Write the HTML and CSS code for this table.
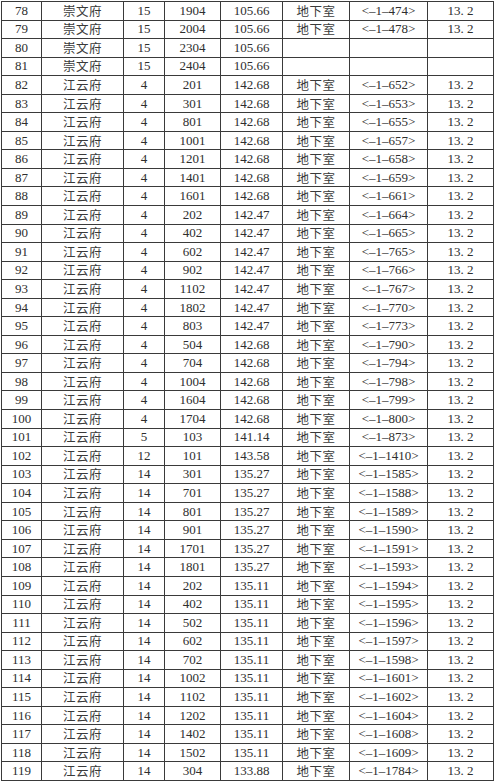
FILE: index.html
```html
<!DOCTYPE html>
<html lang="zh">
<head>
<meta charset="utf-8">
<title>车位表</title>
<link rel="stylesheet" href="styles.css">
</head>
<body>
<table class="sheet">
<colgroup>
<col class="c-no"><col class="c-name"><col class="c-bld"><col class="c-room"><col class="c-area"><col class="c-loc"><col class="c-code"><col class="c-size">
</colgroup>
<tbody>
<tr><td>78</td><td class="zh">崇文府</td><td>15</td><td>1904</td><td>105.66</td><td class="zh">地下室</td><td>&lt;–1–474&gt;</td><td>13. 2</td></tr>
<tr><td>79</td><td class="zh">崇文府</td><td>15</td><td>2004</td><td>105.66</td><td class="zh">地下室</td><td>&lt;–1–478&gt;</td><td>13. 2</td></tr>
<tr><td>80</td><td class="zh">崇文府</td><td>15</td><td>2304</td><td>105.66</td><td></td><td></td><td></td></tr>
<tr><td>81</td><td class="zh">崇文府</td><td>15</td><td>2404</td><td>105.66</td><td></td><td></td><td></td></tr>
<tr><td>82</td><td class="zh">江云府</td><td>4</td><td>201</td><td>142.68</td><td class="zh">地下室</td><td>&lt;–1–652&gt;</td><td>13. 2</td></tr>
<tr><td>83</td><td class="zh">江云府</td><td>4</td><td>301</td><td>142.68</td><td class="zh">地下室</td><td>&lt;–1–653&gt;</td><td>13. 2</td></tr>
<tr><td>84</td><td class="zh">江云府</td><td>4</td><td>801</td><td>142.68</td><td class="zh">地下室</td><td>&lt;–1–655&gt;</td><td>13. 2</td></tr>
<tr><td>85</td><td class="zh">江云府</td><td>4</td><td>1001</td><td>142.68</td><td class="zh">地下室</td><td>&lt;–1–657&gt;</td><td>13. 2</td></tr>
<tr><td>86</td><td class="zh">江云府</td><td>4</td><td>1201</td><td>142.68</td><td class="zh">地下室</td><td>&lt;–1–658&gt;</td><td>13. 2</td></tr>
<tr><td>87</td><td class="zh">江云府</td><td>4</td><td>1401</td><td>142.68</td><td class="zh">地下室</td><td>&lt;–1–659&gt;</td><td>13. 2</td></tr>
<tr><td>88</td><td class="zh">江云府</td><td>4</td><td>1601</td><td>142.68</td><td class="zh">地下室</td><td>&lt;–1–661&gt;</td><td>13. 2</td></tr>
<tr><td>89</td><td class="zh">江云府</td><td>4</td><td>202</td><td>142.47</td><td class="zh">地下室</td><td>&lt;–1–664&gt;</td><td>13. 2</td></tr>
<tr><td>90</td><td class="zh">江云府</td><td>4</td><td>402</td><td>142.47</td><td class="zh">地下室</td><td>&lt;–1–665&gt;</td><td>13. 2</td></tr>
<tr><td>91</td><td class="zh">江云府</td><td>4</td><td>602</td><td>142.47</td><td class="zh">地下室</td><td>&lt;–1–765&gt;</td><td>13. 2</td></tr>
<tr><td>92</td><td class="zh">江云府</td><td>4</td><td>902</td><td>142.47</td><td class="zh">地下室</td><td>&lt;–1–766&gt;</td><td>13. 2</td></tr>
<tr><td>93</td><td class="zh">江云府</td><td>4</td><td>1102</td><td>142.47</td><td class="zh">地下室</td><td>&lt;–1–767&gt;</td><td>13. 2</td></tr>
<tr><td>94</td><td class="zh">江云府</td><td>4</td><td>1802</td><td>142.47</td><td class="zh">地下室</td><td>&lt;–1–770&gt;</td><td>13. 2</td></tr>
<tr><td>95</td><td class="zh">江云府</td><td>4</td><td>803</td><td>142.47</td><td class="zh">地下室</td><td>&lt;–1–773&gt;</td><td>13. 2</td></tr>
<tr><td>96</td><td class="zh">江云府</td><td>4</td><td>504</td><td>142.68</td><td class="zh">地下室</td><td>&lt;–1–790&gt;</td><td>13. 2</td></tr>
<tr><td>97</td><td class="zh">江云府</td><td>4</td><td>704</td><td>142.68</td><td class="zh">地下室</td><td>&lt;–1–794&gt;</td><td>13. 2</td></tr>
<tr><td>98</td><td class="zh">江云府</td><td>4</td><td>1004</td><td>142.68</td><td class="zh">地下室</td><td>&lt;–1–798&gt;</td><td>13. 2</td></tr>
<tr><td>99</td><td class="zh">江云府</td><td>4</td><td>1604</td><td>142.68</td><td class="zh">地下室</td><td>&lt;–1–799&gt;</td><td>13. 2</td></tr>
<tr><td>100</td><td class="zh">江云府</td><td>4</td><td>1704</td><td>142.68</td><td class="zh">地下室</td><td>&lt;–1–800&gt;</td><td>13. 2</td></tr>
<tr><td>101</td><td class="zh">江云府</td><td>5</td><td>103</td><td>141.14</td><td class="zh">地下室</td><td>&lt;–1–873&gt;</td><td>13. 2</td></tr>
<tr><td>102</td><td class="zh">江云府</td><td>12</td><td>101</td><td>143.58</td><td class="zh">地下室</td><td>&lt;–1–1410&gt;</td><td>13. 2</td></tr>
<tr><td>103</td><td class="zh">江云府</td><td>14</td><td>301</td><td>135.27</td><td class="zh">地下室</td><td>&lt;–1–1585&gt;</td><td>13. 2</td></tr>
<tr><td>104</td><td class="zh">江云府</td><td>14</td><td>701</td><td>135.27</td><td class="zh">地下室</td><td>&lt;–1–1588&gt;</td><td>13. 2</td></tr>
<tr><td>105</td><td class="zh">江云府</td><td>14</td><td>801</td><td>135.27</td><td class="zh">地下室</td><td>&lt;–1–1589&gt;</td><td>13. 2</td></tr>
<tr><td>106</td><td class="zh">江云府</td><td>14</td><td>901</td><td>135.27</td><td class="zh">地下室</td><td>&lt;–1–1590&gt;</td><td>13. 2</td></tr>
<tr><td>107</td><td class="zh">江云府</td><td>14</td><td>1701</td><td>135.27</td><td class="zh">地下室</td><td>&lt;–1–1591&gt;</td><td>13. 2</td></tr>
<tr><td>108</td><td class="zh">江云府</td><td>14</td><td>1801</td><td>135.27</td><td class="zh">地下室</td><td>&lt;–1–1593&gt;</td><td>13. 2</td></tr>
<tr><td>109</td><td class="zh">江云府</td><td>14</td><td>202</td><td>135.11</td><td class="zh">地下室</td><td>&lt;–1–1594&gt;</td><td>13. 2</td></tr>
<tr><td>110</td><td class="zh">江云府</td><td>14</td><td>402</td><td>135.11</td><td class="zh">地下室</td><td>&lt;–1–1595&gt;</td><td>13. 2</td></tr>
<tr><td>111</td><td class="zh">江云府</td><td>14</td><td>502</td><td>135.11</td><td class="zh">地下室</td><td>&lt;–1–1596&gt;</td><td>13. 2</td></tr>
<tr><td>112</td><td class="zh">江云府</td><td>14</td><td>602</td><td>135.11</td><td class="zh">地下室</td><td>&lt;–1–1597&gt;</td><td>13. 2</td></tr>
<tr><td>113</td><td class="zh">江云府</td><td>14</td><td>702</td><td>135.11</td><td class="zh">地下室</td><td>&lt;–1–1598&gt;</td><td>13. 2</td></tr>
<tr><td>114</td><td class="zh">江云府</td><td>14</td><td>1002</td><td>135.11</td><td class="zh">地下室</td><td>&lt;–1–1601&gt;</td><td>13. 2</td></tr>
<tr><td>115</td><td class="zh">江云府</td><td>14</td><td>1102</td><td>135.11</td><td class="zh">地下室</td><td>&lt;–1–1602&gt;</td><td>13. 2</td></tr>
<tr><td>116</td><td class="zh">江云府</td><td>14</td><td>1202</td><td>135.11</td><td class="zh">地下室</td><td>&lt;–1–1604&gt;</td><td>13. 2</td></tr>
<tr><td>117</td><td class="zh">江云府</td><td>14</td><td>1402</td><td>135.11</td><td class="zh">地下室</td><td>&lt;–1–1608&gt;</td><td>13. 2</td></tr>
<tr><td>118</td><td class="zh">江云府</td><td>14</td><td>1502</td><td>135.11</td><td class="zh">地下室</td><td>&lt;–1–1609&gt;</td><td>13. 2</td></tr>
<tr><td>119</td><td class="zh">江云府</td><td>14</td><td>304</td><td>133.88</td><td class="zh">地下室</td><td>&lt;–1–1784&gt;</td><td>13. 2</td></tr>
</tbody>
</table>
</body>
</html>
```
FILE: styles.css
```css
html, body {
  margin: 0;
  padding: 0;
  background: #ffffff;
}

body {
  padding: 1px 0 0 1px;
  font-family: "Liberation Serif", "Noto Sans CJK SC", serif;
  color: #2e2e2e;
}

.sheet {
  border-collapse: collapse;
  table-layout: fixed;
  width: 492px;
  font-size: 13px;
}

.c-no { width: 40px; }
.c-name { width: 82px; }
.c-bld { width: 41px; }
.c-room { width: 56px; }
.c-area { width: 62px; }
.c-loc { width: 67px; }
.c-code { width: 78px; }
.c-size { width: 66px; }

.sheet tr {
  height: 18.55px;
}

.sheet td {
  border: 1px solid #3a3a3a;
  padding: 0;
  text-align: center;
  vertical-align: middle;
  line-height: 16px;
  white-space: nowrap;
  overflow: hidden;
}

.sheet td.zh {
  font-family: "Noto Sans CJK SC", sans-serif;
  font-size: 12.5px;
  color: #3a3a3a;
  letter-spacing: 0.5px;
}
```
